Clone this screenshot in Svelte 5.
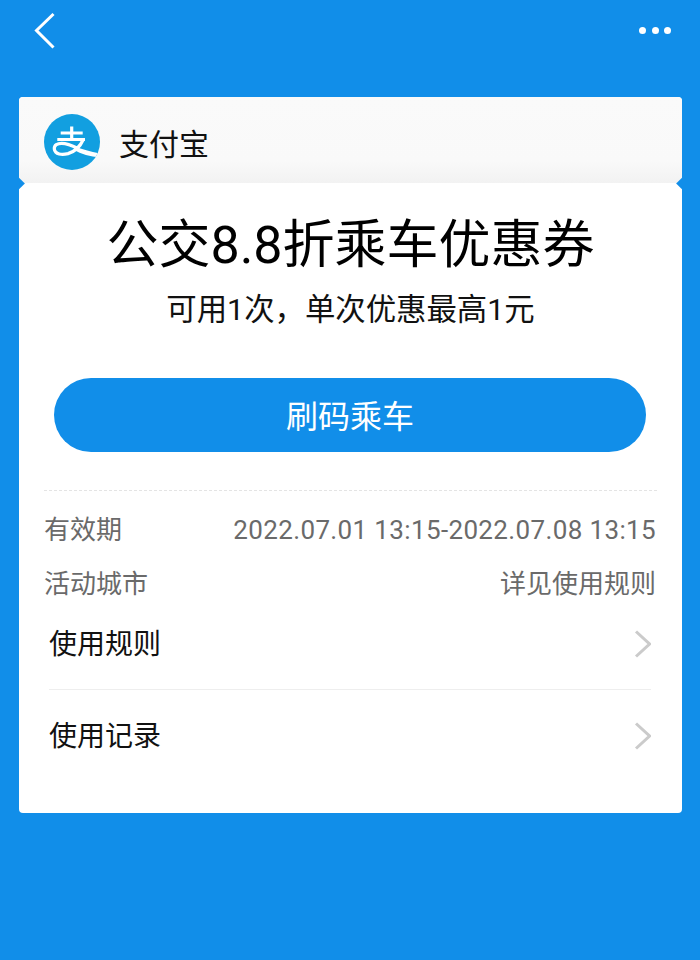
<script>
  const links = ["使用规则", "使用记录"];
</script>

<div class="page">
  <header class="nav">
    <svg class="back" width="24" height="38" viewBox="0 0 24 38">
      <path d="M20.5 2 L3.5 18.5 L20.5 35.5" fill="none" stroke="#fff" stroke-width="3" />
    </svg>
    <div class="more">
      <span></span><span></span><span></span>
    </div>
  </header>

  <main class="card">
    <div class="brand">
      <svg class="logo" width="56" height="56" viewBox="0 0 56 56">
        <defs>
          <clipPath id="logo-clip"><circle cx="28" cy="28" r="28" /></clipPath>
        </defs>
        <circle cx="28" cy="28" r="28" fill="#129fe0" />
        <g clip-path="url(#logo-clip)">
          <path
            d="M16.7 19 H38.7 M27.7 12.5 V25.5 M13.3 25.5 H41 M39.3 25.5 C36 33 31 37.5 24 39.6 C18 41.2 11 40.5 10.3 35 C10 31 13.5 29.3 17.7 29.3 C23 29.3 28 31.5 34 34.5"
            fill="none"
            stroke="#fff"
            stroke-width="3.2"
          />
          <path d="M31 32.6 C38 35.5 46 37.5 56 39.5 L56 43.5 C46 42.5 37 40 30 36 Z" fill="#fff" />
        </g>
      </svg>
      <span class="brand-name">支付宝</span>
    </div>
    <span class="notch left"></span>
    <span class="notch right"></span>

    <div class="body">
      <h1>公交8.8折乘车优惠券</h1>
      <p class="sub">可用1次，单次优惠最高1元</p>
      <button class="primary">刷码乘车</button>

      <div class="details">
        <div class="detail-row">
          <span>有效期</span>
          <span class="date">2022.07.01 13:15-2022.07.08 13:15</span>
        </div>
        <div class="detail-row">
          <span>活动城市</span>
          <span>详见使用规则</span>
        </div>
      </div>

      <div class="links">
        {#each links as link}
          <div class="link-row">
            <span class="link-label">{link}</span>
            <svg width="18" height="28" viewBox="0 0 18 28">
              <path d="M3 1.5 L16.5 14 L3 26.5" fill="none" stroke="#cbcbcb" stroke-width="3" />
            </svg>
          </div>
        {/each}
      </div>
    </div>
  </main>
</div>

<style>
  :global(body) {
    margin: 0;
    background: #118ee9;
  }
  .page {
    height: 960px;
    background: #118ee9;
    padding: 0 18px 0 19px;
    box-sizing: border-box;
    font-family: Roboto, "Noto Sans CJK SC", sans-serif;
  }
  .nav {
    height: 97px;
    display: flex;
    justify-content: space-between;
    align-items: flex-start;
    margin: 0 -18px 0 -19px;
    padding: 12px 29px 0 33px;
    box-sizing: border-box;
  }
  .more {
    display: flex;
    gap: 5.5px;
    margin-top: 15px;
  }
  .more span {
    width: 7px;
    height: 7px;
    border-radius: 50%;
    background: #fff;
  }
  .card {
    position: relative;
    height: 716px;
    background: #fff;
    border-radius: 4px;
    overflow: hidden;
  }
  .brand {
    height: 86px;
    box-sizing: border-box;
    display: flex;
    align-items: center;
    gap: 19px;
    padding: 3px 0 0 25px;
    background: linear-gradient(#fafafa 0%, #f9f9f9 75%, #f2f2f2 100%);
  }
  .brand-name {
    font-size: 30px;
    color: #111;
  }
  .notch {
    position: absolute;
    top: 82px;
    width: 9px;
    height: 9px;
    background: #118ee9;
    transform: rotate(45deg);
  }
  .notch.left {
    left: -5px;
  }
  .notch.right {
    right: -5px;
  }
  .body {
    padding: 0 25px;
    text-align: center;
  }
  h1 {
    margin: 0;
    padding-top: 27px;
    font-size: 52px;
    line-height: 72px;
    font-weight: 400;
    color: #000;
  }
  .sub {
    margin: 7px 0 0;
    font-size: 30.4px;
    line-height: 42px;
    color: #111;
  }
  .primary {
    display: block;
    width: 592px;
    height: 74px;
    margin: 47px 0 0 10px;
    padding: 0 0 3px;
    border: 0;
    border-radius: 37px;
    background: #118ee9;
    color: #fff;
    font: inherit;
    font-size: 32px;
  }
  .details {
    margin-top: 38px;
    border-top: 1px dashed #e4e4e4;
    padding-top: 20px;
  }
  .detail-row {
    display: flex;
    justify-content: space-between;
    height: 54px;
    padding-right: 1px;
    font-size: 26px;
    line-height: 38px;
    color: #6a6a6a;
  }
  .date {
    letter-spacing: 0.36px;
  }
  .links {
    margin: -21px 6px 0 5px;
  }
  .link-row {
    display: flex;
    justify-content: space-between;
    align-items: center;
    height: 91px;
    font-size: 28px;
    color: #111;
  }
  .link-row + .link-row {
    border-top: 1px solid #eee;
  }
  .link-label {
    padding-bottom: 3px;
  }
</style>
